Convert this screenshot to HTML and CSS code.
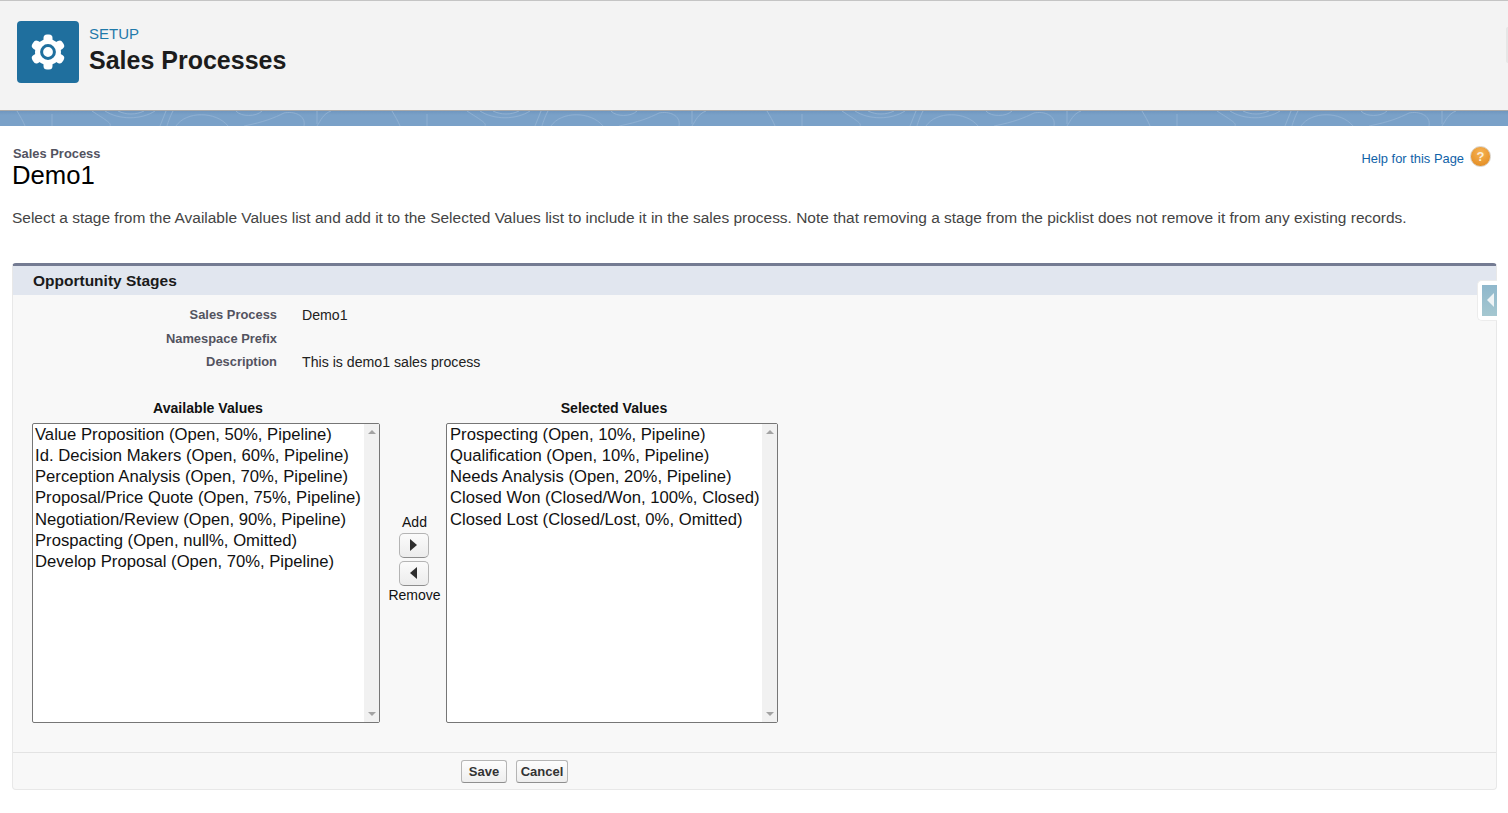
FILE: index.html
```html
<!DOCTYPE html>
<html lang="en">
<head>
  <meta charset="UTF-8" />
  <title>Sales Processes</title>
  <link rel="stylesheet" href="styles.css">
</head>
<body>
  <header class="setup-head">
    <div class="setup-icon">
      <svg width="36" height="36" viewBox="0 0 36 36">
        <g fill="#fff">
          <circle cx="18" cy="18" r="13"/>
          <rect x="13.500" y="0.500" width="9" height="10" rx="3.500"/>
          <rect x="13.500" y="0.500" width="9" height="10" rx="3.500" transform="rotate(60 18 18)"/>
          <rect x="13.500" y="0.500" width="9" height="10" rx="3.500" transform="rotate(120 18 18)"/>
          <rect x="13.500" y="0.500" width="9" height="10" rx="3.500" transform="rotate(180 18 18)"/>
          <rect x="13.500" y="0.500" width="9" height="10" rx="3.500" transform="rotate(240 18 18)"/>
          <rect x="13.500" y="0.500" width="9" height="10" rx="3.500" transform="rotate(300 18 18)"/>
        </g>
        <circle cx="18" cy="18" r="6.400" fill="#fff" stroke="#1f6f9e" stroke-width="3"/>
      </svg>
    </div>
    <div class="setup-titles">
      <div class="setup-crumb">SETUP</div>
      <h1 class="setup-title">Sales Processes</h1>
    </div>
    <div class="edge-tab"></div>
  </header>

  <div class="band">
    <svg width="100%" height="15">
      <defs>
        <pattern id="swirl" width="375" height="15" patternUnits="userSpaceOnUse">
          <g fill="none" stroke="#8fb0d2" stroke-width="1">
            <path d="M17 0c3 5 6 10 8 15M52 3v12M92 0c12 8 20 12 18 15M105 0c14 9 36 9 50 0M118 0c8 4 18 4 26 0"/>
            <path d="M160 15l6-15M167 15c0 0 3-10 6-15M176 15c10-15 40-15 52 0"/>
            <path d="M236 0c5 6 20 6 26 0M244 15c20-4 30-8 40-13c10-2 22 2 20 13"/>
            <path d="M317 15c4-6 6-12 14-15M317 0v13"/>
          </g>
        </pattern>
      </defs>
      <rect width="100%" height="15" fill="url(#swirl)"/>
    </svg>
  </div>

  <main class="content">
    <div class="page-head">
      <div>
        <div class="page-type">Sales Process</div>
        <h2 class="page-name">Demo1</h2>
      </div>
      <a class="help-link"><span class="help-text">Help for this Page</span> <span class="help-icon">?</span></a>
    </div>

    <p class="intro">Select a stage from the Available Values list and add it to the Selected Values list to include it in the sales process. Note that removing a stage from the picklist does not remove it from any existing records.</p>

    <section class="panel">
      <h3 class="panel-head">Opportunity Stages</h3>
      <div class="collapse-tab"><span class="collapse-btn"></span></div>

      <dl class="details">
        <dt>Sales Process</dt><dd>Demo1</dd>
        <dt>Namespace Prefix</dt><dd></dd>
        <dt>Description</dt><dd>This is demo1 sales process</dd>
      </dl>

      <div class="duel">
        <div class="duel-col col-left">
          <div class="duel-label">Available Values</div>
          <div class="listbox">
            <ul>
              <li>Value Proposition (Open, 50%, Pipeline)</li>
              <li>Id. Decision Makers (Open, 60%, Pipeline)</li>
              <li>Perception Analysis (Open, 70%, Pipeline)</li>
              <li>Proposal/Price Quote (Open, 75%, Pipeline)</li>
              <li>Negotiation/Review (Open, 90%, Pipeline)</li>
              <li>Prospacting (Open, null%, Omitted)</li>
              <li>Develop Proposal (Open, 70%, Pipeline)</li>
            </ul>
            <div class="scrollbar"><span class="arrow-up"></span><span class="arrow-down"></span></div>
          </div>
        </div>

        <div class="duel-mid">
          <span>Add</span>
          <button class="move-btn"><span class="tri-right"></span></button>
          <button class="move-btn"><span class="tri-left"></span></button>
          <span class="remove-label">Remove</span>
        </div>

        <div class="duel-col col-right">
          <div class="duel-label">Selected Values</div>
          <div class="listbox list-right">
            <ul>
              <li>Prospecting (Open, 10%, Pipeline)</li>
              <li>Qualification (Open, 10%, Pipeline)</li>
              <li>Needs Analysis (Open, 20%, Pipeline)</li>
              <li>Closed Won (Closed/Won, 100%, Closed)</li>
              <li>Closed Lost (Closed/Lost, 0%, Omitted)</li>
            </ul>
            <div class="scrollbar"><span class="arrow-up"></span><span class="arrow-down"></span></div>
          </div>
        </div>
      </div>

      <div class="panel-foot">
        <button class="btn btn-save">Save</button>
        <button class="btn btn-cancel">Cancel</button>
      </div>
    </section>
  </main>
</body>
</html>
```

FILE: styles.css
```css
html, body {
  margin: 0;
  padding: 0;
}
body {
  background-color: #fff;
  color: #181818;
  font-family: "Liberation Sans", Arial, sans-serif;
  overflow: hidden;
}
h1, h2, h3, p, dl, dd, ul {
  margin: 0;
  padding: 0;
}

/* top bar */
.setup-head {
  position: relative;
  box-sizing: border-box;
  height: 111px;
  background-color: #f3f3f3;
  border-top: 1px solid #c4c4c4;
  border-bottom: 1px solid #a9a9a9;
  display: flex;
  align-items: flex-start;
  padding: 20px 0 0 17px;
}
.setup-icon {
  width: 62px;
  height: 62px;
  background-color: #1f6f9e;
  border-radius: 4px;
  display: flex;
  align-items: center;
  justify-content: center;
}
.setup-titles {
  margin-left: 10px;
}
.setup-crumb {
  font-size: 15px;
  line-height: 18px;
  margin-top: 4px;
  color: #1f7aaa;
}
.setup-title {
  font-size: 25px;
  line-height: 30px;
  margin-top: 2px;
  font-weight: bold;
  color: #1c1c1c;
}
.edge-tab {
  position: absolute;
  right: 0;
  top: 26px;
  width: 2px;
  height: 36px;
  background-color: #e6e6e6;
  border-radius: 2px 0 0 2px;
}
.band {
  height: 15px;
  background: linear-gradient(#6f96bf, #7aa1c8 4px);
}
.band svg {
  display: block;
}

/* page content */
.content {
  padding: 20px 11px 0 12px;
}
.page-head {
  display: flex;
  justify-content: space-between;
  align-items: flex-start;
}
.page-type {
  font-size: 12.900px;
  line-height: 15px;
  font-weight: bold;
  color: #53535f;
  margin-left: 1px;
}
.page-name {
  font-size: 25.700px;
  line-height: 28px;
  font-weight: normal;
  color: #000;
}
.help-link {
  font-size: 12.900px;
  color: #0f62a8;
  margin-right: 6px;
  display: flex;
  align-items: flex-start;
  gap: 6px;
}
.help-text {
  padding-top: 5px;
}
.help-icon {
  width: 19px;
  height: 19px;
  border-radius: 50%;
  background: radial-gradient(circle at 50% 30%, #f7b455, #e0861a);
  border: 1px solid #d8d0c4;
  color: #fbeed9;
  font-size: 13px;
  font-weight: bold;
  text-align: center;
  line-height: 19px;
}
.intro {
  margin-top: 19px;
  font-size: 15.480px;
  line-height: 20px;
  color: #444;
  white-space: nowrap;
}

/* panel */
.panel {
  position: relative;
  box-sizing: border-box;
  margin-top: 35px;
  width: 1485px;
  height: 527px;
  background-color: #f8f8f8;
  border: 1px solid #e8e8e8;
  border-top: 3px solid #747b92;
  border-radius: 4px;
}
.panel-head {
  background-color: #e1e6ef;
  height: 29px;
  line-height: 29px;
  font-size: 15.500px;
  font-weight: bold;
  color: #1a1a1a;
  padding-left: 20px;
}
.collapse-tab {
  position: absolute;
  top: 14px;
  right: -1px;
  box-sizing: border-box;
  width: 20px;
  height: 41px;
  background-color: #fff;
  border: 1px solid #ececec;
  border-right: none;
  border-radius: 5px 0 0 5px;
  padding: 4px 0 0 4px;
}
.collapse-btn {
  display: block;
  width: 15px;
  height: 31px;
  background: linear-gradient(#8fb8cc, #a5c7d0);
  position: relative;
}
.collapse-btn::before {
  content: "";
  position: absolute;
  left: 5px;
  top: 8px;
  border: 7px solid transparent;
  border-left: none;
  border-right-color: #eef3f5;
}
.details {
  display: grid;
  grid-template-columns: 264px 1fr;
  column-gap: 25px;
  padding-top: 8px;
  font-size: 14.150px;
  line-height: 23.500px;
  color: #222;
}
.details dt {
  font-size: 12.900px;
  font-weight: bold;
  text-align: right;
  color: #53535f;
}
.details dd {
  padding-top: 1px;
  line-height: 22.500px;
}

/* duelling lists */
.duel {
  display: flex;
  align-items: flex-start;
  margin: 26px 0 0 19px;
}
.duel-col {
  display: flex;
  flex-direction: column;
}
.col-left {
  width: 348px;
}
.col-right {
  width: 332px;
}
.duel-label {
  font-size: 14.100px;
  line-height: 16px;
  font-weight: bold;
  text-align: center;
  color: #111;
  margin-bottom: 7px;
  padding-left: 4px;
}
.listbox {
  box-sizing: border-box;
  height: 300px;
  background-color: #fff;
  border: 1px solid #767676;
  border-radius: 2px;
  display: flex;
  justify-content: space-between;
}
.listbox ul {
  list-style: none;
  padding: 0.450px 0 0 2px;
  font-size: 16.670px;
  line-height: 21.170px;
  color: #111;
  white-space: nowrap;
  min-width: 0;
}
.list-right ul {
  padding-left: 3px;
}
.scrollbar {
  flex: none;
  width: 15px;
  background-color: #f1f1f1;
  display: flex;
  flex-direction: column;
  justify-content: space-between;
  align-items: center;
  padding: 6px 0;
}
.arrow-up {
  border: 4px solid transparent;
  border-top: none;
  border-bottom: 4px solid #a3a3a3;
}
.arrow-down {
  border: 4px solid transparent;
  border-bottom: none;
  border-top: 4px solid #a3a3a3;
}
.duel-mid {
  box-sizing: border-box;
  width: 66px;
  display: flex;
  flex-direction: column;
  align-items: center;
  font-size: 14px;
  line-height: 16px;
  color: #111;
  padding: 114px 0 0 3px;
}
.move-btn {
  box-sizing: border-box;
  width: 30px;
  height: 25px;
  margin: 3px 2px 0 0;
  padding: 0;
  background: linear-gradient(#fbfbfb, #ececec);
  border: 1px solid #b4b4b4;
  border-bottom-color: #8d8d8d;
  border-radius: 5px;
  display: flex;
  align-items: center;
  justify-content: center;
}
.remove-label {
  margin-top: 1px;
}
.tri-right {
  border: 6.500px solid transparent;
  border-right: none;
  border-left: 7px solid #2e2e2e;
}
.tri-left {
  border: 6.500px solid transparent;
  border-left: none;
  border-right: 7px solid #2e2e2e;
}

/* footer */
.panel-foot {
  position: absolute;
  left: 0;
  right: 0;
  bottom: 0;
  height: 37px;
  box-sizing: border-box;
  border-top: 1px solid #e3e3e3;
  padding: 7px 0 0 448px;
  display: flex;
  gap: 9px;
  align-items: flex-start;
}
.btn {
  height: 23px;
  box-sizing: border-box;
  padding: 0;
  font-family: "Liberation Sans", Arial, sans-serif;
  font-size: 13px;
  font-weight: bold;
  color: #333;
  background: linear-gradient(#fdfdfd, #eeeeee);
  border: 1px solid #b5b5b5;
  border-bottom-color: #8f8f8f;
  border-radius: 3px;
}
.btn-save {
  width: 46px;
}
.btn-cancel {
  width: 52px;
}
```
